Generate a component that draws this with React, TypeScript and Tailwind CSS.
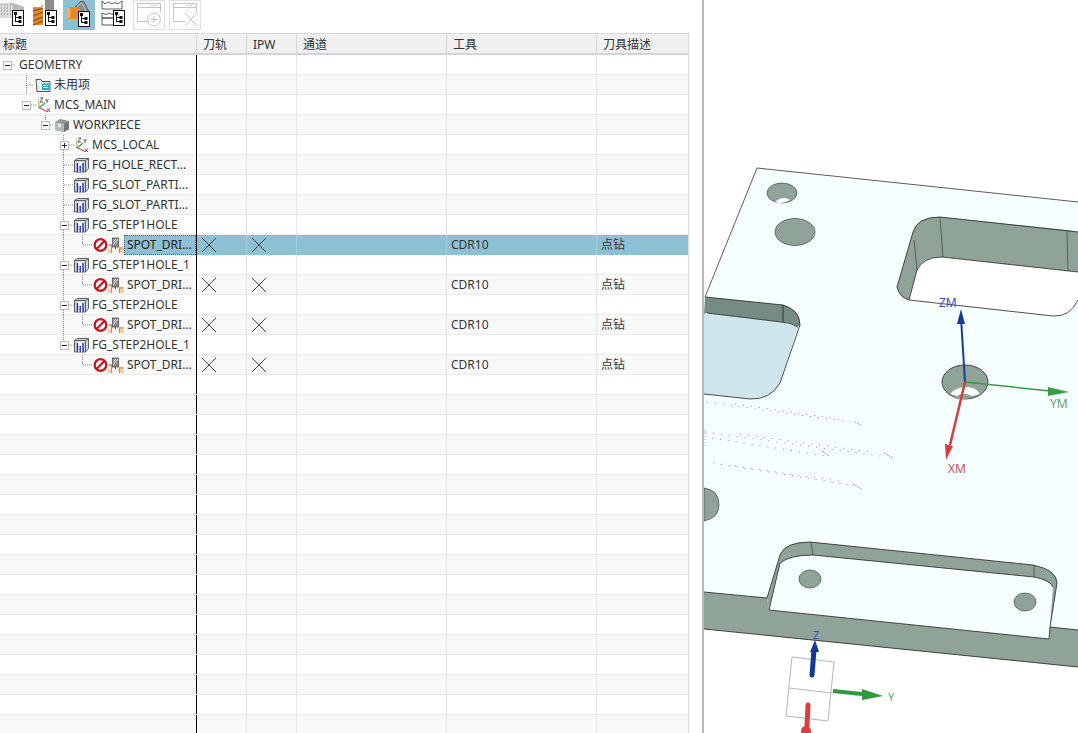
import type { ReactNode } from 'react';

const FONT = "font-['Noto_Sans','Noto_Sans_CJK_SC',sans-serif]";

// small tree badge used by the toolbar view icons
function TreeBadge({ x, y }: { x: number; y: number }) {
  return (
    <g transform={`translate(${x} ${y})`}>
      <rect x="0.5" y="0.5" width="11" height="15" fill="#fff" stroke="#111" />
      <path d="M3.500 3v9M3.500 7.500h4M3.500 11.500h4" stroke="#111" fill="none" />
      <rect x="2" y="2" width="3" height="3" fill="#111" />
      <rect x="6.500" y="6" width="3" height="3" fill="#111" />
      <rect x="6.500" y="10" width="3" height="3" fill="#111" />
    </g>
  );
}

function ProgramViewIcon() {
  return (
    <svg width="33" height="30" viewBox="0 0 33 30">
      <rect x="0" y="3" width="13" height="15" fill="#dcdcdc" />
      <path d="M1 5h11M1 8h11M1 11h11M1 14h11" stroke="#777" strokeDasharray="1 2" />
      <path d="M9 2l7 2 8 3v9H13V6z" fill="#b5bab8" />
      <TreeBadge x={12} y={10} />
    </svg>
  );
}

function ToolViewIcon() {
  return (
    <svg width="30" height="30" viewBox="0 0 30 30">
      <rect x="12" y="0" width="9" height="12" fill="#8d8d8d" />
      <rect x="0" y="7" width="10" height="18" rx="1" fill="#e08a34" />
      <path d="M0 11l10-3M0 16l10-4M0 21l10-4M0 25l10-4" stroke="#a85a16" strokeWidth="1.500" />
      <path d="M8 5h2v3H8z" fill="#f0b070" />
      <TreeBadge x={12} y={10} />
    </svg>
  );
}

function GeometryViewIcon() {
  return (
    <svg width="32" height="30" viewBox="0 0 32 30">
      <path d="M9 10l9-9 3 1 6 12-7 6z" fill="#8b8b8b" stroke="#5f5f5f" />
      <path d="M14 6l5-3 5 10" fill="none" stroke="#c8c8c8" />
      <rect x="4" y="7" width="13" height="12" rx="3" fill="#e8892c" />
      <ellipse cx="5.500" cy="13" rx="2" ry="5.500" fill="#f3b060" />
      <TreeBadge x={15} y={11} />
    </svg>
  );
}

function MethodViewIcon() {
  return (
    <svg width="38" height="30" viewBox="0 0 38 30">
      <path d="M7 1v8h20V1l-4 3-3-1.500-3 1.500-4-2-3 2z" fill="#fff" stroke="#333" strokeWidth="0.800" />
      <path d="M7 13l4 1.500 3-1.500 3 1.500 3-1.500v5H7zM7 18v7h12v-7z" fill="#fff" stroke="#333" strokeWidth="0.800" />
      <TreeBadge x={18} y={10} />
    </svg>
  );
}

function DisabledWindowIcon({ mark }: { mark: 'plus' | 'cross' }) {
  return (
    <svg width="32" height="30" viewBox="0 0 32 30" fill="none" stroke="#c4c4c4">
      <rect x="0.500" y="0.500" width="31" height="29" stroke="#e0e0e0" />
      <path d="M16 21.500H4.500v-18h23v9" />
      <path d="M4.500 7.500h23" />
      <path d="M18 5.500h6" strokeDasharray="1 1" />
      {mark === 'plus' ? (
        <g>
          <circle cx="21" cy="19.500" r="6.500" />
          <path d="M21 16v7M17.500 19.500h7" />
        </g>
      ) : (
        <path d="M16 13l12 13M28 13L16 26" />
      )}
    </svg>
  );
}

function FolderIcon() {
  return (
    <svg width="16" height="16" viewBox="0 0 16 16">
      <path d="M1 2.500h5l1 2h8v10H2z" fill="#e9eef0" stroke="#555" />
      <rect x="7" y="6.500" width="7" height="6.500" fill="#2fa6bd" />
      <path d="M8 8.500h5M8 10.500h5" stroke="#dff3f7" />
    </svg>
  );
}

function CsysIcon() {
  return (
    <svg width="14" height="16" viewBox="0 0 14 16" fill="none">
      <path d="M1.500 2v9" stroke="#9a9a9a" strokeDasharray="1 1" />
      <path d="M2 11l6-5" stroke="#2ea84a" strokeWidth="1.200" />
      <path d="M2 10.500l8 4" stroke="#d8404a" strokeWidth="1.200" />
      <path d="M2 10V4" stroke="#d9b030" />
      <path d="M3 1h3L3 5h3M8.500 2l1.500 2 1.500-2M10 4v2M10 11.500l3 3.500M13 11.500L10 15" stroke="#333" strokeWidth="0.800" />
    </svg>
  );
}

function WorkpieceIcon() {
  return (
    <svg width="16" height="16" viewBox="0 0 16 16">
      <path d="M1 5l5-3 9 2v8l-5 3-9-2z" fill="#8f9695" />
      <path d="M1 5l9 2v8l-9-2z" fill="#b4b9b8" />
      <path d="M10 7l5-3v8l-5 3z" fill="#70777a" />
      <path d="M4 6v4l3 .7V6.700z" fill="#e4e6e6" />
    </svg>
  );
}

function FeatureGroupIcon() {
  return (
    <svg width="16" height="16" viewBox="0 0 16 16">
      <path d="M.5 3.500l3-2h11v10l-3 3.500H.5z" fill="#cfd4d6" stroke="#5a5f63" />
      <path d="M.5 3.500h11V15M11.500 3.500l3-2" fill="none" stroke="#5a5f63" />
      <path d="M3.500 5h5.500v10H3.500z" fill="#fff" />
      <path d="M3.500 15V6M9 15V6M6.200 15V9" fill="none" stroke="#1c2bb0" strokeWidth="1.400" />
    </svg>
  );
}

function BanIcon() {
  return (
    <svg width="15" height="16" viewBox="0 0 15 16" fill="none" stroke="#c8141e" strokeWidth="2.200">
      <circle cx="7.500" cy="8" r="5.800" />
      <path d="M3.500 12l8-8" />
    </svg>
  );
}

function DrillOpIcon() {
  return (
    <svg width="16" height="16" viewBox="0 0 16 16">
      <rect x="4.500" y="1" width="6" height="9" fill="#8d9090" stroke="#444" strokeWidth="0.700" />
      <path d="M5 8l5-6M5 5l3-3" stroke="#e4e4e4" />
      <path d="M7.500 10v2" stroke="#444" />
      <path d="M.5 8h3v8" fill="none" stroke="#d98a3c" strokeWidth="1.300" />
      <path d="M15.500 11h-4v5" fill="none" stroke="#d98a3c" strokeWidth="1.300" />
      <rect x="12" y="12" width="4" height="4" fill="#f6cfa6" />
      <rect x="0" y="12" width="3" height="4" fill="#f6cfa6" />
    </svg>
  );
}

function CrossMark() {
  return (
    <svg width="16" height="16" viewBox="0 0 16 16" fill="none" stroke="#333" strokeWidth="0.900">
      <path d="M1 1l14 14M15 1L1 15" />
    </svg>
  );
}

interface TreeRow {
  text: string;
  gutter: number; // x where the icons start
  box?: '-' | '+';
  boxX?: number;
  lines?: string; // dotted connector path inside the 20px row
  icons: ReactNode;
  textX: number;
  selected?: boolean;
  op?: boolean;
}

const FG_LINE = 'M63.500 0v20M64 10h10';
const FG_OPEN = 'M63.500 0v5M63.500 15v5M69 10h5';
const LEAF_LINE = 'M63.500 0v20M82.500 0v10M83 10h10';
const LEAF_LAST = 'M82.500 0v10M83 10h10';
const FG = <FeatureGroupIcon />;
const OP = (
  <>
    <BanIcon />
    <DrillOpIcon />
  </>
);

const rows: TreeRow[] = [
  { text: 'GEOMETRY', gutter: 19, box: '-', boxX: 7, lines: 'M12 10h3', icons: null, textX: 19 },
  { text: '未用项', gutter: 35, lines: 'M26.500 0v20M26.500 10h8', icons: <FolderIcon />, textX: 54 },
  { text: 'MCS_MAIN', gutter: 37, box: '-', boxX: 26, lines: 'M31 10h5', icons: <CsysIcon />, textX: 54 },
  { text: 'WORKPIECE', gutter: 54, box: '-', boxX: 45, lines: 'M45.500 0v5M50 10h4', icons: <WorkpieceIcon />, textX: 73 },
  { text: 'MCS_LOCAL', gutter: 75, box: '+', boxX: 64, lines: FG_OPEN, icons: <CsysIcon />, textX: 92 },
  { text: 'FG_HOLE_RECT...', gutter: 74, lines: FG_LINE, icons: FG, textX: 92 },
  { text: 'FG_SLOT_PARTI...', gutter: 74, lines: FG_LINE, icons: FG, textX: 92 },
  { text: 'FG_SLOT_PARTI...', gutter: 74, lines: FG_LINE, icons: FG, textX: 92 },
  { text: 'FG_STEP1HOLE', gutter: 74, box: '-', boxX: 64, lines: FG_OPEN, icons: FG, textX: 92 },
  { text: 'SPOT_DRI...', gutter: 93, lines: LEAF_LINE, icons: OP, textX: 127, op: true, selected: true },
  { text: 'FG_STEP1HOLE_1', gutter: 74, box: '-', boxX: 64, lines: FG_OPEN, icons: FG, textX: 92 },
  { text: 'SPOT_DRI...', gutter: 93, lines: LEAF_LINE, icons: OP, textX: 127, op: true },
  { text: 'FG_STEP2HOLE', gutter: 74, box: '-', boxX: 64, lines: FG_OPEN, icons: FG, textX: 92 },
  { text: 'SPOT_DRI...', gutter: 93, lines: LEAF_LINE, icons: OP, textX: 127, op: true },
  { text: 'FG_STEP2HOLE_1', gutter: 74, box: '-', boxX: 64, lines: 'M63.500 0v5M69 10h5', icons: FG, textX: 92 },
  { text: 'SPOT_DRI...', gutter: 93, lines: LEAF_LAST, icons: OP, textX: 127, op: true },
];

const COLS = 'grid grid-cols-[197px_50px_50px_150px_150px_1fr]';
const CELL = 'border-r border-[#e6e6e6] h-full';

function TitleCell({ row }: { row: TreeRow }) {
  return (
    <div className="relative flex h-full items-center overflow-hidden">
      <svg width={row.gutter} height="20" className="shrink-0">
        {row.lines && <path d={row.lines} fill="none" stroke="#8c8c8c" strokeDasharray="1 1" />}
        {row.box && row.boxX !== undefined && (
          <g transform={`translate(${row.boxX - 4} 6)`}>
            <rect x="0.500" y="0.500" width="8" height="8" fill="#fff" stroke="#bdbdbd" />
            <path d={row.box === '-' ? 'M2 4.500h5' : 'M2 4.500h5M4.500 2v5'} stroke="#222" />
          </g>
        )}
      </svg>
      <div className="flex shrink-0 items-center">{row.icons}</div>
      {row.selected ? (
        <span className="absolute inset-y-0 left-[124px] right-0 border border-dotted border-[#4c6a75] bg-[#8cc1d3] pl-[2px] leading-[18px] text-[#222]">
          {row.text}
        </span>
      ) : (
        <span className="absolute left-0 whitespace-nowrap" style={{ paddingLeft: row.textX }}>
          {row.text}
        </span>
      )}
    </div>
  );
}

function TableRow({ row, index }: { row?: TreeRow; index: number }) {
  const tint = index % 2 === 1 ? 'bg-[#f8f8f8]' : 'bg-white';
  const cellBorder = row?.selected ? 'border-r border-[#a9cfdb] h-full bg-[#8cc1d3]' : CELL;
  return (
    <div className={`${COLS} h-5 items-center border-b border-[#ececec] ${tint}`}>
      <div className="h-full border-r border-black">{row && <TitleCell row={row} />}</div>
      <div className={`${cellBorder} flex items-center pl-1`}>{row?.op && <CrossMark />}</div>
      <div className={`${cellBorder} flex items-center pl-1`}>{row?.op && <CrossMark />}</div>
      <div className={cellBorder} />
      <div className={`${cellBorder} pl-1 leading-5`}>{row?.op && 'CDR10'}</div>
      <div className={`h-full pl-1 leading-5 ${row?.selected ? 'bg-[#8cc1d3]' : ''}`}>{row?.op && '点钻'}</div>
    </div>
  );
}

function Viewport() {
  const wall = '#8fa398';
  const face = '#f6ffff';
  return (
    <svg viewBox="704 0 374 733" width="374" height="733" className="block">
      <rect x="704" y="0" width="374" height="733" fill="#fff" />
      {/* top face of the plate, pocket floor included */}
      <path d="M757 168L1078 202V630L1050 627 1049 639 769 610 767 598 704 592V394L705 297z" fill={face} />
      <path d="M705 297L757 168L1078 202" fill="none" stroke="#333" strokeWidth="0.800" />

      {/* front face */}
      <path d="M704 592L767 598 769 610 1049 639 1050 627 1078 630V667L704 629z" fill={wall} />
      <path d="M704 592L767 598M769 610L1049 639M704 629L1078 667M1050 627L1078 630M1050 627L1049 639" fill="none" stroke="#222" strokeWidth="0.800" />

      {/* lower pocket */}
      <path d="M767 598L780 555Q785 542 810 542L1033 565Q1057 570 1057 583L1050 627 1053 587Q1050 580 1034 577L813 555Q790 555 780 563L769 610z" fill={wall} />
      <path d="M767 598L780 555Q785 542 810 542L1033 565Q1057 570 1057 583L1050 627M769 610L780 563Q790 555 813 555L1034 577Q1050 580 1053 587" fill="none" stroke="#222" strokeWidth="0.800" />
      <path d="M811 542l2 13M1034 565v12" stroke="#333" strokeWidth="0.600" />
      <ellipse cx="810" cy="579" rx="11" ry="9" fill={wall} stroke="#333" strokeWidth="0.600" />
      <ellipse cx="1025" cy="602" rx="11" ry="9" fill={wall} stroke="#333" strokeWidth="0.600" />

      {/* holes */}
      <ellipse cx="782" cy="193" rx="15" ry="10" fill={wall} stroke="#333" strokeWidth="0.600" />
      <path d="M775 202q8-7 15-2-8 5-15 2z" fill="#fff" />
      <ellipse cx="795" cy="232" rx="20" ry="13.500" fill={wall} stroke="#333" strokeWidth="0.600" />
      <path d="M704 488Q719 490 719 505 719 518 704 521z" fill={wall} stroke="#333" strokeWidth="0.600" />

      {/* upper pocket */}
      <path d="M897 287L913 232Q917 217 940 217L1067 230 1078 232V272L942 257Q923 257 917 270L909 300Q899 297 897 287z" fill={wall} />
      <path d="M909 300L917 270Q923 257 942 257L1078 272V300Q1070 317 1053 316z" fill="#fff" />
      <path d="M909 300Q899 297 897 287L913 232Q917 217 940 217L1078 232M909 300L917 270Q923 257 942 257L1078 272M909 300L1053 316Q1070 317 1078 300" fill="none" stroke="#222" strokeWidth="0.800" />
      <path d="M940 217l3 40M1067 230l1 41M914 240l3 30" stroke="#333" strokeWidth="0.600" />

      {/* left pocket */}
      <path d="M705 297L783 305Q800 310 800 325L798 327Q790 322 781 322L707 313 704 314z" fill="#768b84" />
      <path d="M704 314L707 313 781 322Q790 322 798 327L780 383Q770 400 750 399L704 394z" fill="#cfe5ec" />
      <path d="M705 297L783 305Q800 310 800 325L780 383Q770 400 750 399L704 394M707 313L781 322Q790 322 798 327M783 305v17" fill="none" stroke="#222" strokeWidth="0.800" />

      {/* engraved text, only dots are visible at this zoom */}
      <g fill="none" stroke="#8a8a8a" strokeWidth="1" strokeDasharray="1 7">
        <path d="M707 402L850 422M735 404L845 420" />
        <path d="M705 432L880 456M712 438L826 456M740 434L870 452" />
        <path d="M713 463L850 485M735 466L845 482" />
      </g>
      <path d="M855 422l7 4M884 453l9 5M853 484l9 5M822 451l7 5" stroke="#777" strokeDasharray="1 1" />
      <path d="M705 430v16" stroke="#aaa" strokeDasharray="1 2" />

      {/* centre hole and work csys */}
      <ellipse cx="965" cy="382" rx="23" ry="17" fill={wall} stroke="#222" strokeWidth="0.800" />
      <path d="M950 394q15 6 30 0-4-7-14-7-10 0-16 7z" fill="#fff" />
      <path d="M954 398q10-8 19-1-10 4-19 1z" fill={wall} />
      <path d="M965 382L961 318" stroke="#1a3a96" strokeWidth="2" />
      <path d="M961 309l-4 15h8z" fill="#1a3a96" />
      <path d="M965 382L1050 391" stroke="#3a9a48" strokeWidth="1.500" />
      <path d="M1069 392L1048 387v9z" fill="#3a9a48" />
      <path d="M965 382L950 445" stroke="#d83c3c" strokeWidth="2.500" />
      <path d="M946 460l-1-16 8 2z" fill="#d83c3c" />
      <text x="939" y="307" fontSize="12" fill="#3550cc" fontFamily="Noto Sans">ZM</text>
      <text x="1050" y="408" fontSize="12" fill="#5f9f6f" fontFamily="Noto Sans">YM</text>
      <text x="948" y="473" fontSize="12" fill="#c85060" fontFamily="Noto Sans">XM</text>

      {/* view triad */}
      <path d="M792 657L834 662 828 721 786 716zM789 688L832 693" fill="none" stroke="#b5b5b5" />
      <path d="M812 675L814 650" stroke="#0f3a96" strokeWidth="5" strokeLinecap="round" />
      <path d="M815 640l-5 12h9z" fill="#0f3a96" />
      <path d="M833 691L862 694" stroke="#2f9a3c" strokeWidth="4" />
      <path d="M883 696L862 689v11z" fill="#2f9a3c" />
      <path d="M808 705L807 726" stroke="#e03c3c" strokeWidth="5" strokeLinecap="round" />
      <circle cx="806" cy="731" r="5" fill="#e03c3c" />
      <text x="813" y="639" fontSize="11" fill="#3550cc" fontFamily="Noto Sans">Z</text>
      <text x="888" y="701" fontSize="11" fill="#5f9f6f" fontFamily="Noto Sans">Y</text>
    </svg>
  );
}

export default function App() {
  const blanks = Array.from({ length: 18 }, (_, i) => i + rows.length);
  return (
    <div className={`${FONT} flex h-[733px] w-[1078px] overflow-hidden bg-white text-[12px] text-[#333]`}>
      <div className="flex w-[702px] shrink-0 flex-col">
        {/* toolbar */}
        <div className="flex h-[33px] shrink-0 items-start">
          <ProgramViewIcon />
          <ToolViewIcon />
          <div className="h-[30px] w-[32px] bg-[#8cc1d3]">
            <GeometryViewIcon />
          </div>
          <MethodViewIcon />
          <DisabledWindowIcon mark="plus" />
          <div className="ml-1">
            <DisabledWindowIcon mark="cross" />
          </div>
        </div>
        {/* operation table */}
        <div className="min-h-0 flex-1 w-[689px] overflow-hidden border-t border-r border-[#d9d9d9]">
          <div className={`${COLS} h-[21px] items-center border-b-2 border-[#d4d4d4] bg-[#f0f0f0]`}>
            <div className="h-full border-r border-[#d4d4d4] pl-[3px] leading-[21px]">标题</div>
            <div className="h-full border-r border-[#d4d4d4] pl-[6px] leading-[21px]">刀轨</div>
            <div className="h-full border-r border-[#d4d4d4] pl-[6px] leading-[21px]">IPW</div>
            <div className="h-full border-r border-[#d4d4d4] pl-[6px] leading-[21px]">通道</div>
            <div className="h-full border-r border-[#d4d4d4] pl-[6px] leading-[21px]">工具</div>
            <div className="h-full pl-[6px] leading-[21px]">刀具描述</div>
          </div>
          {rows.map((row, i) => (
            <TableRow key={i} row={row} index={i} />
          ))}
          {blanks.map((i) => (
            <TableRow key={i} index={i} />
          ))}
        </div>
      </div>
      <div className="h-full w-0.5 shrink-0 bg-[#b9b9b9]" />
      <Viewport />
    </div>
  );
}
